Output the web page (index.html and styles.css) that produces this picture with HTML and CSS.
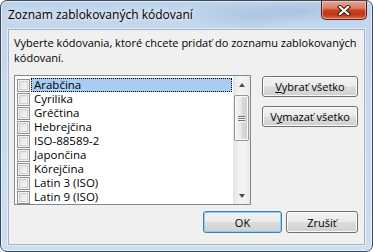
FILE: index.html
```html
<!DOCTYPE html>
<html lang="sk">
<head>
<meta charset="utf-8">
<title>Zoznam zablokovaných kódovaní</title>
<link rel="stylesheet" href="styles.css">
</head>
<body>
<div class="window">
  <div class="titlebar">
    <span class="title">Zoznam zablokovaných kódovaní</span>
    <div class="close">
      <svg width="14" height="11" viewBox="0 0 14 11">
        <path d="M3 2 L11 9 M11 2 L3 9" stroke="#3b1a14" stroke-width="4.2" stroke-linecap="square" fill="none"/>
        <path d="M3 2 L11 9 M11 2 L3 9" stroke="#ffffff" stroke-width="2.2" stroke-linecap="square" fill="none"/>
      </svg>
    </div>
  </div>
  <div class="client">
    <p class="prompt">Vyberte kódovania, ktoré chcete pridať do zoznamu zablokovaných<br>kódovaní.</p>
    <div class="main">
      <div class="listbox">
        <ul class="items">
          <li class="item selected"><span class="cb"></span><span class="label">Arabčina</span></li>
          <li class="item"><span class="cb"></span><span class="label">Cyrilika</span></li>
          <li class="item"><span class="cb"></span><span class="label">Gréčtina</span></li>
          <li class="item"><span class="cb"></span><span class="label">Hebrejčina</span></li>
          <li class="item"><span class="cb"></span><span class="label">ISO-88589-2</span></li>
          <li class="item"><span class="cb"></span><span class="label">Japončina</span></li>
          <li class="item"><span class="cb"></span><span class="label">Kórejčina</span></li>
          <li class="item"><span class="cb"></span><span class="label">Latin 3 (ISO)</span></li>
          <li class="item"><span class="cb"></span><span class="label">Latin 9 (ISO)</span></li>
        </ul>
        <div class="scrollbar">
          <div class="arrow"><span class="tri up"></span></div>
          <div class="track">
            <div class="thumb"><span class="grip"></span><span class="grip"></span><span class="grip"></span></div>
          </div>
          <div class="arrow"><span class="tri down"></span></div>
        </div>
      </div>
      <div class="side">
        <button class="btn wide"><u>V</u>ybrať všetko</button>
        <button class="btn wide">V<u>y</u>mazať všetko</button>
      </div>
    </div>
    <div class="footer">
      <button class="btn ok">OK</button>
      <button class="btn cancel">Zrušiť</button>
    </div>
  </div>
</div>
</body>
</html>
```

FILE: styles.css
```css
* { box-sizing: border-box; }
html, body { margin: 0; padding: 0; }
body {
  width: 373px;
  height: 252px;
  overflow: hidden;
  background: #ffffff;
  font-family: "Open Sans", "Noto Sans", sans-serif;
  font-size: 11px;
  color: #000;
}
.window {
  width: 373px;
  height: 252px;
  border: 1px solid #3d4957;
  border-radius: 7px;
  background:
    radial-gradient(ellipse 60px 14px at 250px 14px, rgba(150,180,215,0.45), rgba(150,180,215,0)),
    radial-gradient(ellipse 50px 12px at 300px 10px, rgba(140,170,205,0.35), rgba(140,170,205,0)),
    linear-gradient(to bottom, #bcd2ea 0%, #c4d7ed 12%, #c9dbef 60%, #cddef1 100%);
  box-shadow: inset 0 0 0 1px rgba(255,255,255,0.55);
  display: flex;
  flex-direction: column;
  overflow: hidden;
}
.titlebar {
  height: 28px;
  flex: none;
  display: flex;
  justify-content: space-between;
  align-items: flex-start;
  padding: 0 5px 0 7px;
}
.title {
  align-self: center;
  font-size: 12px;
  line-height: 16px;
  margin-top: -1px;
  color: #000;
  text-shadow: 0 0 6px rgba(255,255,255,0.9), 0 0 10px rgba(255,255,255,0.7);
}
.close {
  width: 46px;
  height: 19px;
  border: 1px solid #4b2219;
  border-top: none;
  border-radius: 0 0 5px 5px;
  background: linear-gradient(to bottom, #e9a594 0%, #dc7c64 40%, #c8401f 52%, #c2361a 75%, #d9683f 100%);
  box-shadow: inset 0 0 0 1px rgba(255,215,200,0.55);
  display: flex;
  align-items: center;
  justify-content: center;
}
.close svg { display: block; }
.client {
  flex: 1;
  margin: 0 7px 6px 7px;
  border: 1px solid #9fb3ca;
  box-shadow: 0 0 0 1px rgba(255,255,255,0.5);
  background: #f0f0f0;
  display: flex;
  flex-direction: column;
}
.prompt {
  margin: 5px 0 0 5px;
  line-height: 15px;
  white-space: nowrap;
}
.main {
  display: flex;
  margin: 10px 0 0 5px;
}
.listbox {
  width: 237px;
  height: 130px;
  border: 1px solid #828790;
  background: #fff;
  display: flex;
}
.items {
  list-style: none;
  margin: 0;
  padding: 2px 0 0 0;
  flex: 1;
}
.item {
  height: 14px;
  display: flex;
  align-items: center;
  padding-left: 2px;
}
.cb {
  width: 13px;
  height: 13px;
  flex: none;
  border: 1px solid #8e8f8f;
  background: linear-gradient(135deg, #dcdcdc 0%, #f0f0f0 60%, #fdfdfd 100%);
  box-shadow: inset 0 0 0 1px #f4f4f4, inset 0 0 0 2px #cfcfcf;
}
.label {
  flex: 1;
  height: 14px;
  font-size: 11.5px;
  line-height: 12px;
  margin: 0 1px 0 1px;
  padding-left: 2px;
  border: 1px solid transparent;
}
.selected .label {
  background: #a9cdf2;
  border: 1px dotted #000;
}
.scrollbar {
  width: 17px;
  flex: none;
  display: flex;
  flex-direction: column;
  background: linear-gradient(to right, #e4e4e4, #f3f3f3 40%, #f3f3f3 70%, #e9e9e9);
}
.arrow {
  height: 17px;
  flex: none;
  display: flex;
  align-items: center;
  justify-content: center;
}
.tri {
  width: 0;
  height: 0;
  border-left: 3.5px solid transparent;
  border-right: 3.5px solid transparent;
}
.tri.up { border-bottom: 4px solid #4d4d4d; }
.tri.down { border-top: 4px solid #4d4d4d; }
.track {
  flex: 1;
  padding: 2px 0 0 0;
}
.thumb {
  height: 46px;
  margin: 0 1px;
  border: 1px solid #979797;
  border-radius: 2px;
  background: linear-gradient(to right, #f4f4f4 0%, #eaeaea 45%, #d9d9d9 55%, #cfcfcf 100%);
  box-shadow: inset 0 0 0 1px #fbfbfb;
  display: flex;
  flex-direction: column;
  align-items: center;
  justify-content: center;
  gap: 1px;
}
.grip {
  width: 7px;
  height: 1px;
  background: #6f6f6f;
  box-shadow: 0 1px 0 #fafafa;
}
.side {
  width: 96px;
  margin-left: 11px;
  display: flex;
  flex-direction: column;
  gap: 9px;
  padding-top: 1px;
}
.btn {
  height: 21px;
  border: 1px solid #707070;
  border-radius: 3px;
  background: linear-gradient(to bottom, #f2f2f2 0%, #ebebeb 48%, #dddddd 52%, #cfcfcf 100%);
  box-shadow: inset 0 0 0 1px #fbfbfb;
  font-family: "Open Sans", "Noto Sans", sans-serif;
  font-size: 11px;
  line-height: 17px;
  color: #000;
  padding: 0;
  margin: 0;
}
.wide { width: 96px; }
.footer {
  display: flex;
  justify-content: flex-end;
  gap: 4px;
  margin-top: 6px;
  padding-right: 6px;
}
.ok {
  width: 79px;
  height: 22px;
  border-color: #3c7fb1;
  box-shadow: inset 0 0 0 1px #7fd3f6;
}
.cancel {
  width: 72px;
  height: 22px;
}
```
